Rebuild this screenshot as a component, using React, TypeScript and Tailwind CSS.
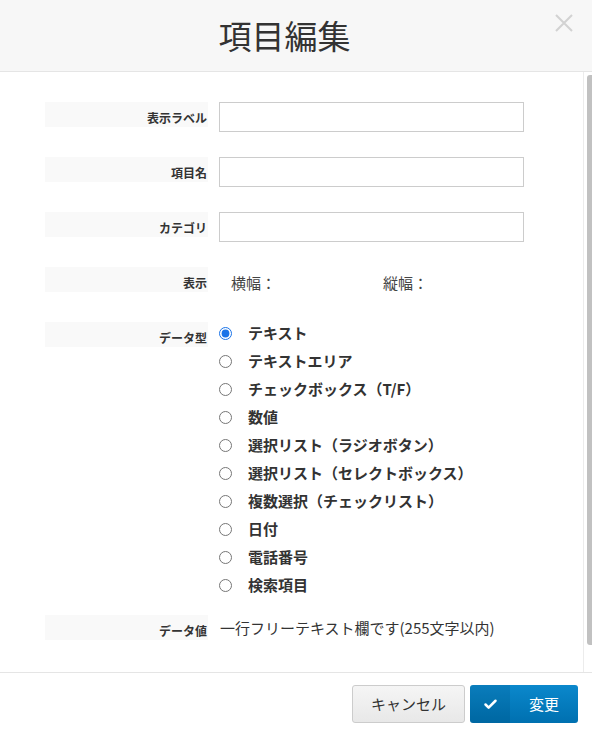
import { Check } from 'lucide-react';

const FONT = { fontFamily: '"Noto Sans CJK JP", "Noto Sans", sans-serif' };

const DATA_TYPES = [
  'テキスト',
  'テキストエリア',
  'チェックボックス（T/F）',
  '数値',
  '選択リスト（ラジオボタン）',
  '選択リスト（セレクトボックス）',
  '複数選択（チェックリスト）',
  '日付',
  '電話番号',
  '検索項目',
];

function Label({ children }: { children: React.ReactNode }) {
  return (
    <div className="w-[163px] h-[25px] shrink-0 bg-[#f9f9f9] pt-[8px] pr-[1px] text-right text-[12px] leading-[16px] font-bold text-[#333]">
      {children}
    </div>
  );
}

function TextRow({ label, className }: { label: string; className?: string }) {
  return (
    <div className={`flex gap-[11px] ${className ?? ''}`}>
      <Label>{label}</Label>
      <input type="text" className="w-[305px] h-[30px] border border-[#cccccc] bg-white px-2 text-[14px] outline-none" />
    </div>
  );
}

export default function App() {
  return (
    <div className="w-[592px] h-[732px] flex flex-col bg-white text-[#333]" style={FONT}>
      {/* ヘッダー */}
      <div className="h-[72px] shrink-0 bg-[#f7f7f7] border-b border-[#e5e5e5] relative flex items-center justify-center pr-[23px]">
        <h2 className="text-[33px] leading-[40px] font-normal text-[#333] -mt-[2px]">項目編集</h2>
        <button className="absolute top-[14px] right-[19px] w-[18px] h-[18px]">
          <svg viewBox="0 0 18 18" className="w-[18px] h-[18px]">
            <path d="M1 1 L17 17 M17 1 L1 17" stroke="#d2d2d2" strokeWidth="2" />
          </svg>
        </button>
      </div>

      {/* 本体 */}
      <div className="flex-1 flex min-h-0">
        <div className="flex-1 flex flex-col pt-[30px] pl-[45px]">
          <TextRow label="表示ラベル" />
          <TextRow label="項目名" className="mt-[25px]" />
          <TextRow label="カテゴリ" className="mt-[25px]" />

          <div className="flex gap-[11px] mt-[25px] h-[30px]">
            <Label>表示</Label>
            <div className="flex items-start pt-[6px] text-[15px] leading-[20px] text-[#444]">
              <span className="ml-[12px] w-[152px]">横幅：</span>
              <span>縦幅：</span>
            </div>
          </div>

          <div className="flex gap-[11px] mt-[25px]">
            <Label>データ型</Label>
            <div className="flex flex-col gap-[6px]">
              {DATA_TYPES.map((t, i) => (
                <label key={t} className="flex items-center h-[22px] cursor-pointer">
                  <input
                    type="radio"
                    name="dataType"
                    defaultChecked={i === 0}
                    className="w-[13px] h-[13px] m-0 accent-[#1a73e8]"
                  />
                  <span className="ml-[16px] text-[15px] leading-[20px] font-bold text-[#333]">{t}</span>
                </label>
              ))}
            </div>
          </div>

          <div className="flex gap-[12px] mt-[19px]">
            <Label>データ値</Label>
            <div className="pt-[3px] text-[15px] leading-[20px] text-[#333]">一行フリーテキスト欄です(255文字以内)</div>
          </div>
        </div>

        {/* スクロールバー */}
        <div className="w-[9px] shrink-0 border-l border-[#ececec] pt-[3px] pl-[3px]">
          <div className="w-[6px] h-[570px] rounded-l-[3px] bg-[#c1c1c1]" />
        </div>
      </div>

      {/* フッター */}
      <div className="h-[60px] shrink-0 border-t border-[#e5e5e5] flex items-start justify-end gap-[5px] pt-[12px] pr-[14px]">
        <button className="w-[113px] h-[38px] rounded-[3px] border border-[#cccccc] bg-gradient-to-b from-[#f5f5f5] to-[#e8e8e8] text-[15px] text-[#333]">
          キャンセル
        </button>
        <button className="w-[108px] h-[38px] rounded-[3px] flex overflow-hidden bg-gradient-to-b from-[#0b88cc] to-[#0070b0] text-white">
          <span className="w-[40px] h-full flex items-center justify-center bg-[#00000014]">
            <Check className="w-[15px] h-[15px]" strokeWidth={4} />
          </span>
          <span className="flex-1 flex items-center justify-center text-[15px]">変更</span>
        </button>
      </div>
    </div>
  );
}
